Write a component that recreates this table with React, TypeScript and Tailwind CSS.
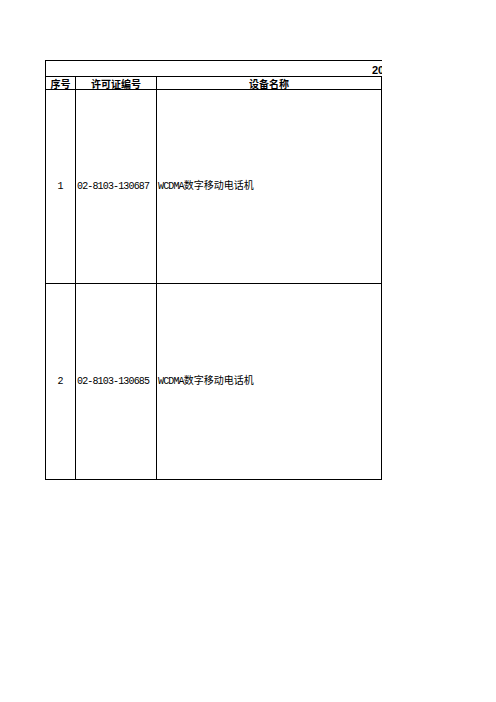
const cjk = { fontFamily: '"Liberation Mono", "Noto Sans CJK SC", monospace' };

const rows = [
  { no: "1", license: "02-8103-130687", name: "WCDMA数字移动电话机", h: "h-[194px]" },
  { no: "2", license: "02-8103-130685", name: "WCDMA数字移动电话机", h: "h-[197px] border-b" },
];

const App = () => {
  return (
    <div className="w-[496px] h-[702px] bg-white pt-[60px] pl-[45px]" style={cjk}>
      <div className="w-[337px]">
        <div className="h-[16px] border-t border-l border-black overflow-hidden whitespace-nowrap pl-[326px] pt-[3px] text-[11px] font-bold leading-[12px]"
          style={{ fontFamily: '"Liberation Sans", "Noto Sans CJK SC", sans-serif' }}>
          20
        </div>
        <div className="grid grid-cols-[30px_81px_226px] h-[13px] border-t border-black text-[10px] font-bold leading-[13px]"
          style={{ fontFamily: '"Noto Sans CJK SC", sans-serif' }}>
          <div className="border-l border-black text-center">序号</div>
          <div className="border-l border-black text-center">许可证编号</div>
          <div className="border-l border-r border-black text-center">设备名称</div>
        </div>
        {rows.map((r) => (
          <div key={r.no} className={`grid grid-cols-[30px_81px_226px] border-t border-black text-[10px] ${r.h}`}>
            <div className="border-l border-black flex items-center justify-center">{r.no}</div>
            <div className="border-l border-black flex items-center pl-[1px] tracking-[-0.85px] whitespace-nowrap">{r.license}</div>
            <div className="border-l border-r border-black flex items-center pl-[1px] whitespace-nowrap">
              <span className="tracking-[-0.85px]">WCDMA</span>
              <span>{r.name.slice(5)}</span>
            </div>
          </div>
        ))}
      </div>
    </div>
  );
};

export default App;
